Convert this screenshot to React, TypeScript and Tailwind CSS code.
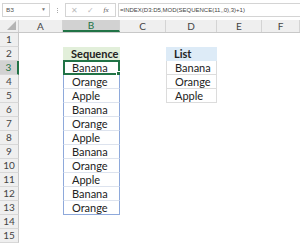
import { Fragment } from 'react';

const COLS = [
  { id: 'A', w: 'w-[44px]' },
  { id: 'B', w: 'w-[57px]' },
  { id: 'C', w: 'w-[46px]' },
  { id: 'D', w: 'w-[51px]' },
  { id: 'E', w: 'w-[45px]' },
  { id: 'F', w: 'w-[38px]' },
];

const SEQ = ['Banana', 'Orange', 'Apple', 'Banana', 'Orange', 'Apple', 'Banana', 'Orange', 'Apple', 'Banana', 'Orange'];
const LIST = ['Banana', 'Orange', 'Apple'];

const ROWS = Array.from({ length: 15 }, (_, i) => i + 1);

const cellB = (row: number) => {
  if (row === 2) return <div className="h-full bg-[#e2efda] pl-[8px] font-bold leading-[14px]">Sequence</div>;
  if (row >= 3 && row <= 13) {
    const last = row === 13;
    return (
      <div
        className={`relative h-full border-x border-[#8ea9db] pl-[8px] leading-[13px] ${
          last ? 'border-b border-b-[#8ea9db]' : 'border-b border-b-[#dde3ee]'
        }`}
      >
        {SEQ[row - 3]}
        {row === 3 && (
          <div className="absolute -left-[1px] -top-[1px] -right-[1px] -bottom-[1px] border-2 border-[#217346]">
            <div className="absolute -right-[3px] -bottom-[3px] w-[5px] h-[5px] bg-[#217346] border border-white" />
          </div>
        )}
      </div>
    );
  }
  return null;
};

const cellD = (row: number) => {
  if (row === 2) return <div className="h-full bg-[#ddebf7] pl-[8px] font-bold leading-[14px]">List</div>;
  if (row >= 3 && row <= 5)
    return (
      <div className="h-full border-x border-b border-[#dcdcdc] pl-[8px] leading-[13px]">{LIST[row - 3]}</div>
    );
  return null;
};

export default function App() {
  return (
    <div className="w-[300px] h-[244px] overflow-hidden bg-white text-[#222]" style={{ fontFamily: 'Lato, "Noto Sans", sans-serif' }}>
      {/* formula bar */}
      <div className="h-[20px] flex items-start pt-[3px] bg-white">
        <div className="ml-[2px] w-[48px] h-[14px] border border-[#d4d4d4] flex items-center justify-between px-[3px] text-[6.5px] text-[#555]">
          <span>B3</span>
          <span className="text-[5px] text-[#777]">▼</span>
        </div>
        <div className="w-[15px] flex flex-col items-center justify-center h-[14px] gap-[1px]">
          <span className="w-[1px] h-[1px] bg-[#aaa]" />
          <span className="w-[1px] h-[1px] bg-[#aaa]" />
          <span className="w-[1px] h-[1px] bg-[#aaa]" />
        </div>
        <div className="w-[51px] h-[14px] border border-[#d4d4d4] flex items-center text-[8px] text-[#bbb]">
          <span className="w-[16px] text-center">✕</span>
          <span className="w-[16px] text-center">✓</span>
          <span className="w-[16px] text-center italic text-[#555] text-[7px]" style={{ fontFamily: '"Liberation Serif", serif' }}>fx</span>
        </div>
        <div className="ml-[2px] flex-1 h-[14px] border border-[#d4d4d4] border-r-0 flex items-center pl-[1px] text-[6px] text-[#444] whitespace-nowrap" style={{ fontFamily: '"Liberation Sans", sans-serif' }}>
          =INDEX(D3:D5,MOD(SEQUENCE(11,,0),3)+1)
        </div>
      </div>

      {/* column headers */}
      <div className="flex h-[13px] bg-[#efefef] border-b border-[#c8c8c8] text-[10px] text-[#444]">
        <div className="w-[19px] h-full border-r border-[#d0d0d0] relative overflow-hidden">
          <div
            className="absolute right-[2px] bottom-[2px] w-0 h-0 border-l-[9px] border-l-transparent border-b-[9px] border-b-[#b4b4b4]"
          />
        </div>
        {COLS.map((c) => (
          <div
            key={c.id}
            className={`${c.w} shrink-0 h-full flex items-center justify-center border-r border-[#d4d4d4] ${
              c.id === 'B' ? 'bg-[#d2d2d2] border-b-2 border-b-[#217346] text-[#217346]' : ''
            }`}
          >
            {c.id}
          </div>
        ))}
      </div>

      {/* rows */}
      <div className="flex flex-col text-[11px]">
        {ROWS.map((r) => (
          <div key={r} className="flex h-[14px]">
            <div
              className={`w-[19px] shrink-0 h-full flex items-center justify-center text-[10px] border-b border-[#d8d8d8] ${
                r === 3
                  ? 'bg-[#d2d2d2] border-r-2 border-r-[#217346] text-[#217346]'
                  : 'bg-[#efefef] border-r border-r-[#c8c8c8] text-[#444]'
              }`}
            >
              {r}
            </div>
            {COLS.map((c) => (
              <Fragment key={c.id}>
                <div className={`${c.w} shrink-0 h-full`}>
                  {c.id === 'B' ? cellB(r) : c.id === 'D' ? cellD(r) : null}
                </div>
              </Fragment>
            ))}
          </div>
        ))}
      </div>
    </div>
  );
}
